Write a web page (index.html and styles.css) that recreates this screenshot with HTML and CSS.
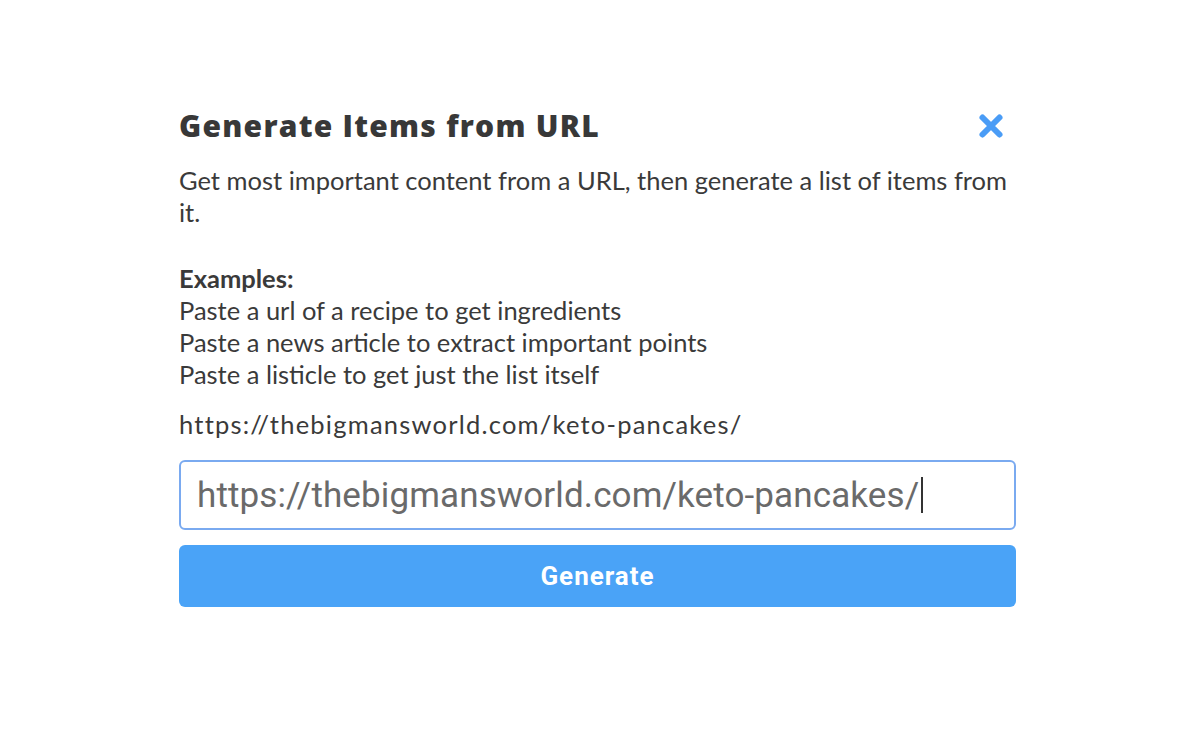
FILE: index.html
```html
<!DOCTYPE html>
<html>
<head>
<meta charset="utf-8">
<link rel="stylesheet" href="styles.css">
</head>
<body>
<div class="page">
  <div class="modal">
    <div class="header">
      <h1 class="title">Generate Items from URL</h1>
      <button class="close" aria-label="Close">
        <svg width="26" height="26" viewBox="0 0 26 26"><path d="M4.5 4.5 L21.5 21.5 M21.5 4.5 L4.5 21.5" stroke="#4a9cf6" stroke-width="6" stroke-linecap="round"/></svg>
      </button>
    </div>
    <p class="desc">Get most important content from a URL, then generate a list of items from it.</p>
    <div class="examples">
      <div class="ex-title">Examples:</div>
      <div>Paste a url of a recipe to get ingredients</div>
      <div>Paste a news article to extract important points</div>
      <div>Paste a listicle to get just the list itself</div>
    </div>
    <div class="url">https://thebigmansworld.com/keto-pancakes/</div>
    <div class="input"><span>https://thebigmansworld.com/keto-pancakes/</span><span class="caret"></span></div>
    <button class="generate">Generate</button>
  </div>
</div>
</body>
</html>
```
FILE: styles.css
```css
html, body { margin: 0; padding: 0; background: #fff; }
body { font-family: "Lato", "Open Sans", sans-serif; color: #3a3a3a; }
.page { display: flex; justify-content: center; padding-top: 103px; }
.modal { width: 837px; margin-left: -5px; }
.header { display: flex; justify-content: space-between; align-items: center; height: 44px; }
.title { margin: 0; font-family: "Open Sans", sans-serif; font-size: 30px; font-weight: 800; letter-spacing: 1.25px; color: #383838; }
.close { border: 0; background: none; padding: 0; margin-right: 12px; margin-top: 2px; display: flex; }
.desc { margin: 17px 0 0; font-size: 25.5px; line-height: 32px; }
.examples { margin-top: 34px; font-size: 25.5px; line-height: 32px; }
.ex-title { font-weight: 700; }
.url { margin-top: 18px; font-size: 25.5px; line-height: 32px; letter-spacing: 1.22px; }
.input { box-sizing: border-box; margin-top: 20px; height: 70px; border: 2px solid #7aaaf0; border-radius: 6px; display: flex; align-items: center; padding-left: 16px; font-family: Roboto, sans-serif; font-size: 35px; letter-spacing: 0.12px; color: #6a6a6a; }
.caret { display: inline-block; width: 1.5px; height: 36px; background: #333; margin-left: 2px; }
.generate { margin-top: 15px; width: 100%; height: 62px; border: 0; border-radius: 6px; background: #4aa3f7; color: #fff; font-family: Roboto, sans-serif; font-weight: 700; font-size: 26px; letter-spacing: 1px; display: block; }
```
